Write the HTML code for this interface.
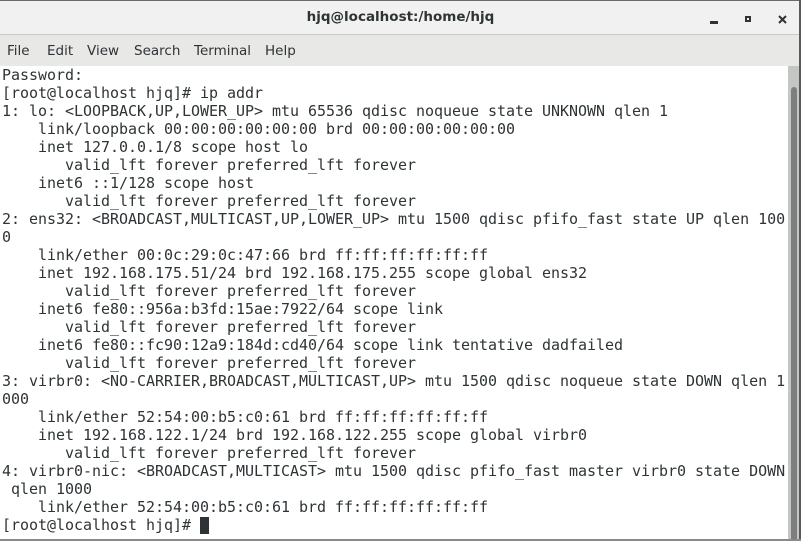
<!DOCTYPE html>
<html><head><meta charset="utf-8"><style>
html,body{margin:0;padding:0;width:801px;height:541px;overflow:hidden;background:#fff;}
#title{position:absolute;left:0;top:0;width:801px;height:34px;background:#f1f1f1;border-top:1px solid #6a6a6a;border-bottom:1px solid #c9c9c6;font-family:"DejaVu Sans","Liberation Sans",sans-serif;box-sizing:border-box;height:35px;}
#title .t{position:absolute;left:0;width:801px;top:8px;text-align:center;font-size:13.5px;color:#2e3436;font-weight:bold;}
#menu{position:absolute;left:0;top:35px;width:801px;height:31px;background:#e8e8e7;font-family:"DejaVu Sans","Liberation Sans",sans-serif;font-size:13.5px;color:#2e3436;}
#menu span{position:absolute;top:8px;}
#term{position:absolute;left:2px;top:66px;font-family:"DejaVu Sans Mono","Liberation Mono",monospace;font-size:15px;letter-spacing:-0.03px;line-height:18px;color:#2e3436;white-space:pre;margin:0;}
#sb{position:absolute;left:788px;top:66px;width:11px;height:475px;background:#c4c6c4;}
#thumb{position:absolute;left:791px;top:87px;width:6px;height:454px;background:#7c7f7e;border-radius:3px 3px 0 0;}
#rb{position:absolute;left:799px;top:0;width:2px;height:541px;background:#5a5a5a;}
#bb{position:absolute;left:0;top:539px;width:801px;height:2px;background:#8a8a8a;}
#cur{position:absolute;left:200px;top:517px;width:9px;height:17px;background:#2e3436;}
</style></head><body>
<div id="title"><div class="t">hjq@localhost:/home/hjq</div>
<div style="position:absolute;left:710px;top:20px;width:8px;height:3px;background:#2e3436"></div>
<div style="position:absolute;left:745px;top:15px;width:6px;height:6px;border:2px solid #2e3436;box-sizing:border-box"></div>
<svg style="position:absolute;left:778px;top:14px" width="9" height="9"><path d="M1 1L8 8M8 1L1 8" stroke="#2e3436" stroke-width="2"/></svg>
</div>
<div id="menu"><span style="left:7px">File</span><span style="left:47px">Edit</span><span style="left:87px">View</span><span style="left:134px">Search</span><span style="left:194px">Terminal</span><span style="left:265px">Help</span></div>
<pre id="term">Password:
[root@localhost hjq]# ip addr
1: lo: &lt;LOOPBACK,UP,LOWER_UP&gt; mtu 65536 qdisc noqueue state UNKNOWN qlen 1
    link/loopback 00:00:00:00:00:00 brd 00:00:00:00:00:00
    inet 127.0.0.1/8 scope host lo
       valid_lft forever preferred_lft forever
    inet6 ::1/128 scope host
       valid_lft forever preferred_lft forever
2: ens32: &lt;BROADCAST,MULTICAST,UP,LOWER_UP&gt; mtu 1500 qdisc pfifo_fast state UP qlen 100
0
    link/ether 00:0c:29:0c:47:66 brd ff:ff:ff:ff:ff:ff
    inet 192.168.175.51/24 brd 192.168.175.255 scope global ens32
       valid_lft forever preferred_lft forever
    inet6 fe80::956a:b3fd:15ae:7922/64 scope link
       valid_lft forever preferred_lft forever
    inet6 fe80::fc90:12a9:184d:cd40/64 scope link tentative dadfailed
       valid_lft forever preferred_lft forever
3: virbr0: &lt;NO-CARRIER,BROADCAST,MULTICAST,UP&gt; mtu 1500 qdisc noqueue state DOWN qlen 1
000
    link/ether 52:54:00:b5:c0:61 brd ff:ff:ff:ff:ff:ff
    inet 192.168.122.1/24 brd 192.168.122.255 scope global virbr0
       valid_lft forever preferred_lft forever
4: virbr0-nic: &lt;BROADCAST,MULTICAST&gt; mtu 1500 qdisc pfifo_fast master virbr0 state DOWN
 qlen 1000
    link/ether 52:54:00:b5:c0:61 brd ff:ff:ff:ff:ff:ff
[root@localhost hjq]# </pre>
<div id="cur"></div>
<div id="sb"></div><div id="thumb"></div>
<div id="rb"></div><div id="bb"></div>
</body></html>
